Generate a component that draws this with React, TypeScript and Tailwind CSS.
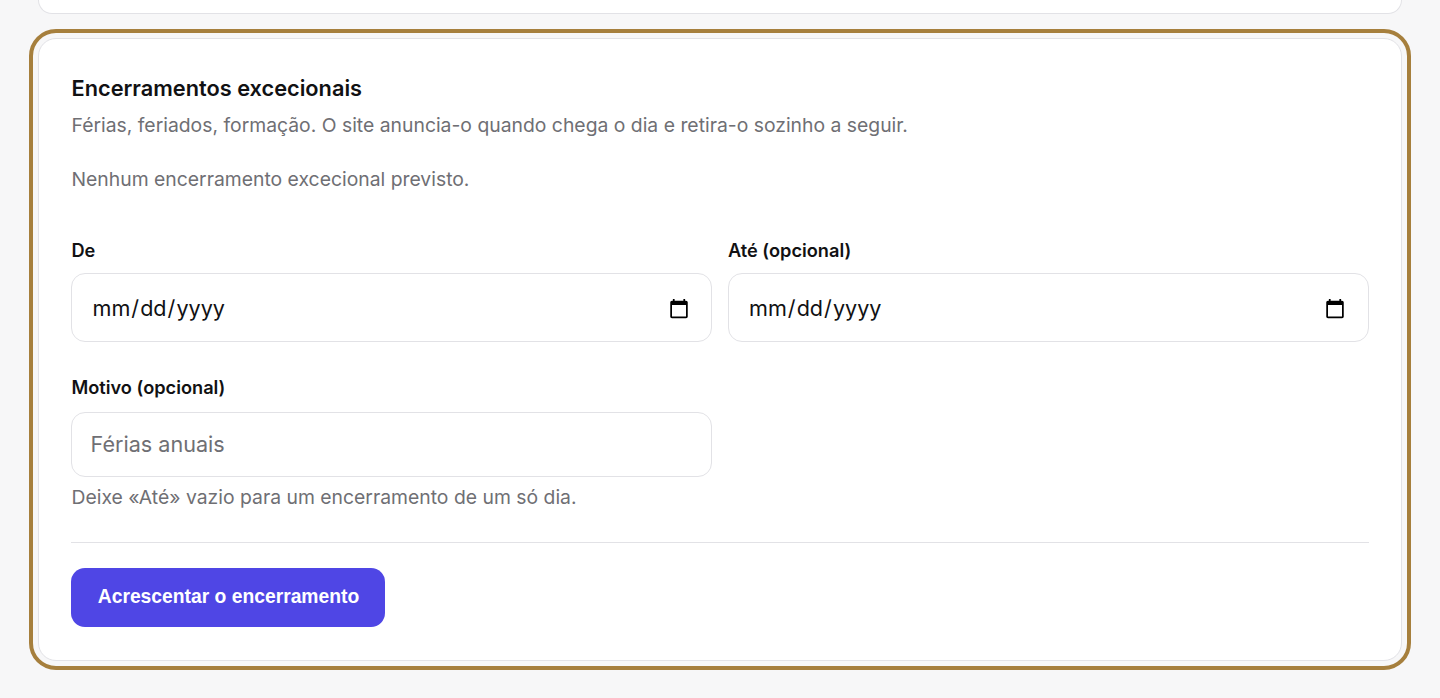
export default function App() {
  return (
    <div className="h-[698px] overflow-hidden bg-[#f7f7f8] px-[37.8px] font-['Inter',sans-serif] text-[#111113]">
      {/* fim do cartão anterior */}
      <div className="h-[14px] rounded-b-[20px] border border-t-0 border-[#e2e2e6] bg-white" />

      <section className="mt-[24px] rounded-[18px] border border-[#e2e2e6] bg-white px-[32.7px] pt-[35px] pb-[32.5px] outline-[4px] outline-offset-[5.4px] outline-[#a67f3d] outline-solid">
        <h2 className="text-[21.75px] leading-[28px] font-semibold">Encerramentos excecionais</h2>
        <p className="mt-[11px] text-[19.35px] leading-[24px] text-[#6f6f74]">
          Férias, feriados, formação. O site anuncia-o quando chega o dia e retira-o sozinho a seguir.
        </p>
        <p className="mt-[30px] text-[19.35px] leading-[24px] text-[#6f6f74]">
          Nenhum encerramento excecional previsto.
        </p>

        <div className="mt-[47px] grid grid-cols-2 gap-x-[16px]">
          <div>
            <label className="block text-[18.2px] leading-[24px] font-semibold">De</label>
            <input
              type="date"
              className="mt-[11px] block h-[69px] w-full rounded-[14px] border border-[#e2e2e6] bg-white px-[19px] pt-[2px] text-[21.6px] outline-none"
            />
          </div>
          <div>
            <label className="block text-[18.2px] leading-[24px] font-semibold">Até (opcional)</label>
            <input
              type="date"
              className="mt-[11px] block h-[69px] w-full rounded-[14px] border border-[#e2e2e6] bg-white pt-[2px] pr-[20px] pl-[19px] text-[21.6px] outline-none"
            />
          </div>
          <div className="mt-[33px]">
            <label className="block text-[18.2px] leading-[24px] font-semibold">Motivo (opcional)</label>
            <input
              type="text"
              placeholder="Férias anuais"
              className="mt-[13px] block h-[65px] w-full rounded-[14px] border border-[#e2e2e6] bg-white px-[18px] pb-[2px] text-[21.6px] outline-none placeholder:text-[#6f6f74]"
            />
          </div>
        </div>

        <p className="mt-[8px] text-[19.35px] leading-[24px] text-[#6f6f74]">
          Deixe «Até» vazio para um encerramento de um só dia.
        </p>

        <div className="mt-[33px] border-t border-[#e2e2e6] pt-[25px]">
          <button className="h-[59px] w-[314px] rounded-[14px] bg-[#4f46e5] font-['Liberation_Sans',sans-serif] text-[19.3px] font-bold text-white">
            Acrescentar o encerramento
          </button>
        </div>
      </section>
    </div>
  )
}
